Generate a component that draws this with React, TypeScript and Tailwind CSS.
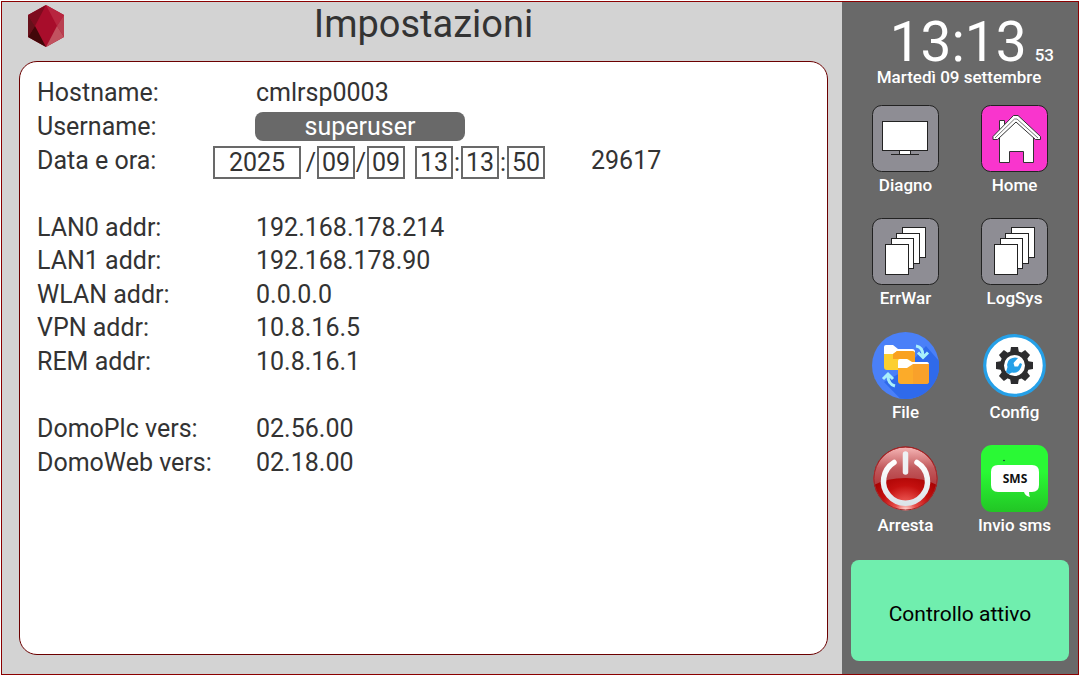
import { useState } from 'react'
import type { ReactNode } from 'react'

const addresses = [
  { label: 'LAN0 addr:', value: '192.168.178.214' },
  { label: 'LAN1 addr:', value: '192.168.178.90' },
  { label: 'WLAN addr:', value: '0.0.0.0' },
  { label: 'VPN addr:', value: '10.8.16.5' },
  { label: 'REM addr:', value: '10.8.16.1' },
]

const versions = [
  { label: 'DomoPlc vers:', value: '02.56.00' },
  { label: 'DomoWeb vers:', value: '02.18.00' },
]

function Logo() {
  return (
    <svg className="h-[42px] w-9" viewBox="0 0 36 42" aria-hidden="true">
      <path d="M18 0 36 10V32L18 42 0 32V10Z" fill="#a80d2b" />
      <path d="M18 0 7 21 0 10Z" fill="#7e0b1e" />
      <path d="M18 0 36 10 29 21Z" fill="#b8253f" />
      <path d="M0 10 7 21 0 32Z" fill="#66101a" />
      <path d="M36 10V32L29 21Z" fill="#b93f50" />
      <path d="M0 32 7 21 18 42Z" fill="#420709" />
      <path d="M36 32 29 21 18 42Z" fill="#c1525f" />
    </svg>
  )
}

function Tile({ fill, children }: { fill: string; children: ReactNode }) {
  return (
    <svg className="size-[67px]" viewBox="0 0 67 67" aria-hidden="true">
      <rect x="0.5" y="0.5" width="66" height="66" rx="9" fill={fill} stroke="#222" />
      {children}
    </svg>
  )
}

function MonitorIcon() {
  return (
    <Tile fill="#8e8d94">
      <rect x="10.5" y="16.5" width="45" height="29" fill="#fff" stroke="#222" />
      <rect x="27.5" y="45.5" width="11" height="4" fill="#fff" stroke="#222" />
      <path d="M19 49.5H47" stroke="#222" />
    </Tile>
  )
}

function HouseIcon() {
  return (
    <Tile fill="#f935cd">
      <path d="M18.5 28V15.5H23.5V24" fill="#fff" stroke="#333" />
      <path d="M18.5 57.5V30L34.5 15 52.5 30V57.5H42.5V46.5H28.5V57.5Z" fill="#fff" stroke="#333" />
      <path
        d="M32.5 10.5H37L59.5 31.5V34.5H54.5L35 17 16.5 34.5H12V31.5Z"
        fill="#fff"
        stroke="#333"
      />
      <path d="M14 33 33.5 14H36L57 33" fill="none" stroke="#777" />
    </Tile>
  )
}

function PagesIcon() {
  return (
    <Tile fill="#8e8d94">
      <g fill="#fff" stroke="#222">
        <rect x="30.5" y="9.5" width="23" height="30" />
        <rect x="24.5" y="15.5" width="23" height="30" />
        <rect x="19.5" y="20.5" width="22" height="30" />
        <rect x="13.5" y="26.5" width="23" height="30" />
      </g>
    </Tile>
  )
}

function FilesIcon() {
  return (
    <svg className="size-[67px]" viewBox="0 0 67 67" aria-hidden="true">
      <circle cx="33.5" cy="33.5" r="33.5" fill="#4a80f8" />
      <path d="M54 14 67 29A33.5 33.5 0 0 1 28 66.5L12 50 30 40Z" fill="#2f6aeb" />
      <path d="M12 15Q12 13 14 13H21L26 17H40Q43 17 43 20V30H12Z" fill="#fff" />
      <path d="M12 22H21L25 19H40Q43 19 43 22V38H15Q12 38 12 35Z" fill="#fccf30" />
      <path d="M25 19H40Q43 19 43 22V31H41L36 27H21V22Z" fill="#f9a11f" />
      <path d="M26 29Q26 27 28 27H35L40 30H55Q57 30 57 33V38H26Z" fill="#fff" />
      <path d="M26 36H35L41 32H57V49Q57 52 54 52H29Q26 52 26 49Z" fill="#fcab29" />
      <path d="M41 32H57V49Q57 52 54 52H41Z" fill="#f9a12a" />
      <g fill="none" stroke="#a9f0fb" strokeWidth="3">
        <path d="M44 14Q51 15 51 24M46 20.5 51 25.5 56 20.5" />
        <path d="M23 54Q16 52 16 44M11 47 16 42 21 47" />
      </g>
    </svg>
  )
}

const teeth = [0, 45, 90, 135, 180, 225, 270, 315]

function GearIcon() {
  return (
    <svg className="size-[67px]" viewBox="0 0 67 67" aria-hidden="true">
      <circle cx="33.5" cy="33.5" r="29.8" fill="#fff" stroke="#25a0e8" strokeWidth="3.2" />
      {teeth.map(angle => (
        <path
          key={angle}
          d="M29 21 30 15H37L38 21Z"
          fill="#2d2d2f"
          transform={`rotate(${angle} 33.5 33.5)`}
        />
      ))}
      <circle cx="33.5" cy="33.5" r="12.5" fill="none" stroke="#2d2d2f" strokeWidth="4" />
      <path
        d="M37 26Q33 24.5 29 27Q25 30 26.5 35L25 40L28 42L31 40.500Q39 42 41 32L39 31L37 34.500L33.500 34.500L32.500 31Z"
        fill="#25a0e8"
      />
    </svg>
  )
}

function PowerIcon() {
  return (
    <svg className="size-[67px]" viewBox="0 0 67 67" aria-hidden="true">
      <defs>
        <linearGradient id="power-top" x1="0" y1="0" x2="0" y2="1">
          <stop offset="0" stopColor="#f5b5b5" />
          <stop offset="0.55" stopColor="#c25a5d" />
          <stop offset="1" stopColor="#b23a3e" />
        </linearGradient>
        <radialGradient id="power-low" cx="0.5" cy="1" r="0.65">
          <stop offset="0" stopColor="#ffe0dc" />
          <stop offset="0.25" stopColor="#e8504c" />
          <stop offset="0.6" stopColor="#c4100f" />
          <stop offset="1" stopColor="#a30000" />
        </radialGradient>
        <linearGradient id="power-mark" x1="0" y1="0" x2="0" y2="1">
          <stop offset="0" stopColor="#fff" />
          <stop offset="1" stopColor="#dce4ea" />
        </linearGradient>
      </defs>
      <circle cx="33.5" cy="33.5" r="32" fill="url(#power-low)" />
      <path d="M2 40A32 32 0 1 1 65 40Q52 33 33.5 33Q15 33 2 40Z" fill="url(#power-top)" />
      <circle cx="33.5" cy="33.5" r="31.5" fill="none" stroke="#a3292b" />
      <path
        d="M22 17.5A22 22 0 1 0 45 17.5"
        fill="none"
        stroke="url(#power-mark)"
        strokeWidth="5.5"
        strokeLinecap="round"
      />
      <path d="M33.5 9V27" stroke="#eef1f4" strokeWidth="5.5" strokeLinecap="round" />
    </svg>
  )
}

function SmsIcon() {
  return (
    <svg className="size-[67px]" viewBox="0 0 67 67" aria-hidden="true">
      <defs>
        <linearGradient id="sms-bg" x1="0" y1="0" x2="0" y2="1">
          <stop offset="0" stopColor="#2af935" />
          <stop offset="0.4" stopColor="#2af935" />
          <stop offset="1" stopColor="#22c525" />
        </linearGradient>
      </defs>
      <rect width="67" height="67" rx="11" fill="url(#sms-bg)" />
      <circle cx="23" cy="15.5" r="0.8" fill="#123" />
      <path
        d="M17 20H51Q58 20 58 27V40Q58 47 51 47H48Q48 50 49 52Q44 51 43 47H17Q10 47 10 40V27Q10 20 17 20Z"
        fill="#fff"
      />
      <text
        x="34"
        y="38"
        textAnchor="middle"
        fontFamily="Open Sans, sans-serif"
        fontWeight="700"
        fontSize="12"
        fill="#111"
      >
        SMS
      </text>
    </svg>
  )
}

const menu = [
  { label: 'Diagno', icon: <MonitorIcon /> },
  { label: 'Home', icon: <HouseIcon /> },
  { label: 'ErrWar', icon: <PagesIcon /> },
  { label: 'LogSys', icon: <PagesIcon /> },
  { label: 'File', icon: <FilesIcon /> },
  { label: 'Config', icon: <GearIcon /> },
  { label: 'Arresta', icon: <PowerIcon /> },
  { label: 'Invio sms', icon: <SmsIcon /> },
]

function InfoRow({ label, value }: { label: string; value: string }) {
  return (
    <div className="flex items-center">
      <dt className="w-[219px]">{label}</dt>
      <dd>{value}</dd>
    </div>
  )
}

function DateField({ name, initial, wide = false }: { name: string; initial: string; wide?: boolean }) {
  const [value, setValue] = useState(initial)
  return (
    <input
      aria-label={name}
      value={value}
      onChange={e => setValue(e.target.value)}
      className={`${wide ? 'w-[88px]' : 'w-[38px]'} h-[33px] border-2 border-[#696969] bg-white text-center`}
    />
  )
}

export default function App() {
  return (
    <div className="h-screen bg-white pt-px pr-[3px] pb-px pl-px font-[Roboto,sans-serif]">
      <div className="flex h-full border border-[#8b0000] bg-[#d3d3d3] text-[#333]">
        <main className="flex min-w-0 flex-1 flex-col pr-[14px] pb-[19px] pl-[17px]">
          <header className="relative h-[59px] shrink-0 text-center">
            <div className="absolute top-[3px] left-[9px]">
              <Logo />
            </div>
            <h1 className="text-[38px] leading-[44px]">Impostazioni</h1>
          </header>

          <section className="flex-1 rounded-[18px] border border-[#6b0000] bg-white px-[17px] pt-[14px] text-[25px] leading-[33px]">
            <dl className="grid h-[403px] grid-rows-12">
              <InfoRow label="Hostname:" value="cmlrsp0003" />
              <div className="flex items-center">
                <dt className="w-[218px]">Username:</dt>
                <dd className="flex">
                  <button
                    type="button"
                    className="h-[29px] w-[210px] rounded-lg bg-[#696969] leading-[29px] text-white"
                  >
                    superuser
                  </button>
                </dd>
              </div>
              <div className="flex items-center pt-[2px]">
                <dt className="w-[176px]">Data e ora:</dt>
                <dd className="flex items-center pt-1">
                  <DateField name="Anno" initial="2025" wide />
                  <span className="w-4 pr-px text-right">/</span>
                  <DateField name="Mese" initial="09" />
                  <span className="w-3 text-center">/</span>
                  <DateField name="Giorno" initial="09" />
                  <span className="w-[10px]" />
                  <DateField name="Ora" initial="13" />
                  <span className="w-2 text-center">:</span>
                  <DateField name="Minuti" initial="13" />
                  <span className="w-2 text-center">:</span>
                  <DateField name="Secondi" initial="50" />
                </dd>
                <dd className="pl-[46px]">29617</dd>
              </div>
              <div />
              {addresses.map(row => (
                <InfoRow key={row.label} {...row} />
              ))}
              <div />
              {versions.map(row => (
                <InfoRow key={row.label} {...row} />
              ))}
            </dl>
          </section>
        </main>

        <aside className="flex w-[236px] shrink-0 flex-col bg-[#696969] text-white">
          {/* Clock */}
          <div className="flex items-baseline justify-end pt-[14px] pr-6">
            <span className="text-[55px] leading-[52px]">13:13</span>
            <span className="pl-2 text-[17px] leading-5 font-medium">53</span>
          </div>
          <p className="pr-[2px] text-center text-[17px] leading-[18px] font-medium">
            Martedì 09 settembre
          </p>

          <nav className="mt-[19px] grid h-[453px] grid-cols-2 grid-rows-4 px-[9px]">
            {menu.map(item => (
              <button
                key={item.label}
                type="button"
                className="flex flex-col items-center gap-px text-[17px] leading-6 font-medium"
              >
                {item.icon}
                {item.label}
              </button>
            ))}
          </nav>

          <button
            type="button"
            className="mx-[9px] mt-auto mb-[13px] h-[101px] rounded-lg bg-[#70eeae] pt-2 text-[21px] text-black"
          >
            Controllo attivo
          </button>
        </aside>
      </div>
    </div>
  )
}
